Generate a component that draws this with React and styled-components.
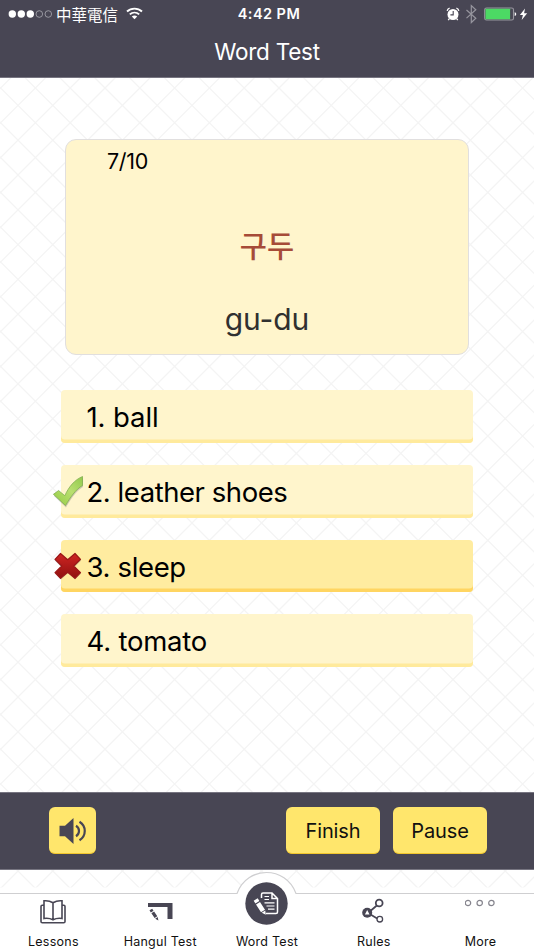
import React from 'react';
import styled, { createGlobalStyle } from 'styled-components';

const dark = '#484654';
const yellow = '#ffe66c';

// 5 x 5 cells of 34.8px, so that the tile has a whole pixel size
const latticeLines = Array.from({ length: 12 }, (_, i) => {
  const x = (i - 6) * 34.8;
  return `M${x} 0l174 174M${174 - x} 0l-174 174`;
}).join('');

const lattice = encodeURIComponent(
  `<svg xmlns="http://www.w3.org/2000/svg" width="174" height="174" viewBox="0 0 174 174"><path d="${latticeLines}" stroke="#f4f4f4" stroke-width="1.3" stroke-linecap="square" fill="none"/></svg>`
);

const GlobalStyle = createGlobalStyle`
  * {
    box-sizing: border-box;
  }
  body {
    margin: 0;
    background: #fff;
    font-family: Inter, 'Noto Sans CJK TC', 'Noto Sans CJK KR', sans-serif;
  }
`;

const Screen = styled.div`
  width: 534px;
  height: 950px;
  overflow: hidden;
  display: flex;
  flex-direction: column;
  background: #fff url("data:image/svg+xml,${lattice}") 18px 1px / 174px 174px;
`;

const Header = styled.header`
  height: 78px;
  background: ${dark};
  border-bottom: 1px solid #777581;
  color: #fff;
`;

const StatusBar = styled.div`
  height: 27px;
  padding: 0 5px 0 8px;
  display: grid;
  grid-template-columns: 1fr auto 1fr;
  align-items: center;
`;

const StatusGroup = styled.div`
  display: flex;
  align-items: center;
  justify-content: ${(p) => (p.$end ? 'flex-end' : 'flex-start')};
`;

const Carrier = styled.span`
  margin: 0 8px 0 4px;
  font: 400 15.5px/26px 'Noto Sans CJK TC', sans-serif;
`;

const Time = styled.span`
  padding-left: 1px;
  font-size: 14.5px;
  font-weight: 600;
  letter-spacing: 0.45px;
`;

const Title = styled.h1`
  margin: 0;
  font-size: 22.5px;
  line-height: 50px;
  font-weight: 400;
  letter-spacing: -0.25px;
  text-align: center;
`;

const Main = styled.main`
  height: 714px;
  padding: 61px 61px 0;
`;

const Card = styled.section`
  height: 215.5px;
  margin: 0 4px 35.5px;
  padding-top: 9px;
  border: 1.5px solid #e1dfdf;
  border-radius: 11px;
  background: #fff5cc;
  text-align: center;
`;

const Counter = styled.div`
  padding-left: 41px;
  font-size: 21.5px;
  line-height: 24px;
  letter-spacing: -0.3px;
  text-align: left;
`;

const Korean = styled.div`
  margin-top: 49px;
  color: #a64b38;
  font: 500 29.5px/44px 'Noto Sans CJK KR', sans-serif;
`;

const Romanized = styled.div`
  margin-top: 35px;
  color: #303030;
  font-size: 30px;
  line-height: 36px;
  letter-spacing: -0.1px;
`;

const Options = styled.div`
  display: flex;
  flex-direction: column;
  gap: 22px;
`;

const Option = styled.div`
  position: relative;
  height: 52.8px;
  padding-left: 25.5px;
  border-radius: 4px;
  background: ${(p) => (p.$picked ? '#ffeca0' : '#fff5cc')};
  box-shadow: inset 0 -3.5px ${(p) => (p.$picked ? '#ffd561' : '#ffea9c')};
  font-size: 27.5px;
  line-height: 55.4px;
  letter-spacing: ${(p) => p.$tracking}px;
`;

const Mark = styled.svg`
  position: absolute;
  left: -9px;
  top: 9px;
`;

const Toolbar = styled.div`
  height: 78px;
  padding: 0 47px 1px 49px;
  border-top: 1px solid #777581;
  border-bottom: 1px solid #777581;
  background: ${dark};
  display: flex;
  align-items: center;
  gap: 13px;
`;

const Button = styled.button`
  width: ${(p) => p.$width || 94}px;
  height: 47px;
  margin: 0 ${(p) => (p.$push ? 'auto' : 0)} 0 0;
  padding: 2px 0 0;
  border: 0;
  border-bottom: 1.5px solid #f1c62e;
  border-radius: 6px;
  background: ${yellow};
  color: #111;
  font: 400 20px/44px Inter, sans-serif;
  letter-spacing: -0.15px;
  display: flex;
  align-items: center;
  justify-content: center;
`;

const TabBar = styled.nav`
  position: relative;
  height: 80px;
  padding-top: 23px;
  display: grid;
  grid-template-columns: repeat(5, 1fr);
  grid-template-rows: 57px;
`;

const Outline = styled.svg`
  position: absolute;
  left: 0;
  top: 0;
`;

const Tab = styled.div`
  position: relative;
  height: 57px;
  display: flex;
  flex-direction: column;
  align-items: center;
  justify-content: flex-end;
`;

const TabIcon = styled.svg`
  margin-bottom: ${(p) => p.$gap}px;
  flex: none;
`;

const Label = styled.span`
  height: 18px;
  font-size: 12.5px;
  line-height: 19px;
  letter-spacing: 0.25px;
  white-space: nowrap;
  color: #111;
`;

const Signal = () => (
  <svg width="44" height="12" viewBox="0 0 44 12">
    {[0, 1, 2, 3, 4].map((i) => (
      <circle
        key={i}
        cx={4.3 + i * 9}
        cy="6"
        r={i < 3 ? 3.7 : 3.3}
        fill={i < 3 ? '#fff' : 'none'}
        stroke={i < 3 ? 'none' : '#aaa9b1'}
        strokeWidth="0.8"
      />
    ))}
  </svg>
);

const Wifi = () => (
  <svg width="17" height="13" viewBox="0 0 17 13" fill="none" stroke="#fff" strokeWidth="1.9">
    <path d="M1 4.5C5.2.6 11.8.6 16 4.5M3.8 7.4c2.7-2.4 6.7-2.4 9.4 0" />
    <path d="M5.8 9.5c1.5-1.3 3.9-1.3 5.4 0L8.5 12.2z" fill="#fff" stroke="none" />
  </svg>
);

const StatusIcons = () => (
  <svg width="83" height="20" viewBox="0 0 83 20">
    <circle cx="7" cy="10.5" r="5.5" fill="#fff" />
    <path d="M1.2 6.8Q1.5 4.8 3.6 4.2M12.8 6.8Q12.5 4.8 10.4 4.2M3.3 14.6l-1 1.6M10.7 14.6l1 1.6" stroke="#fff" strokeWidth="1.3" fill="none" />
    <path d="M7.2 7v3.9H4.4" stroke={dark} strokeWidth="1.1" fill="none" />
    <path d="M20.5 6l9.3 8.3-4.5 4.2V1.6l4.5 4.2-9.3 8.3" fill="none" stroke="#96959e" strokeWidth="1.2" />
    <rect x="38.7" y="4" width="28.8" height="12" rx="1.8" fill="none" stroke="#98979f" strokeWidth="1.1" />
    <rect x="39.5" y="4.8" width="24.6" height="10.4" rx="0.5" fill="#4cd964" />
    <path d="M68.7 8.2c2 .6 2 3.3 0 3.9z" fill="#fff" />
    <path d="M79 4.5l-5.1 6.4h3l-1.2 5 5.5-6.7h-3.1z" fill="#fff" />
  </svg>
);

const Check = () => (
  <Mark width="34" height="36" viewBox="0 0 34 36">
    <defs>
      <linearGradient id="leaf" x1="0" y1="1" x2="1" y2="0">
        <stop offset="0" stopColor="#93cc43" />
        <stop offset="0.55" stopColor="#b9df70" />
        <stop offset="1" stopColor="#91c94c" />
      </linearGradient>
    </defs>
    <path d="M2 22L7 18.5l6 5C17 15 23 8 31 4v9C24 17 19 25 14 33.5z" fill="#777" opacity=".35" />
    <path d="M1.4 20.3l5.2-3.8 6.2 5.2C16.8 12.8 22.5 5.8 30.5 2.5v9C23.5 15.5 18.3 23.5 13.5 31.5z" fill="url(#leaf)" stroke="#78a84a" strokeWidth="0.7" />
  </Mark>
);

const Cross = () => (
  <Mark width="34" height="36" viewBox="0 0 34 36">
    <defs>
      <linearGradient id="ruby" x1="0" y1="0" x2="0" y2="1">
        <stop offset="0" stopColor="#cf2522" />
        <stop offset="1" stopColor="#8f1010" />
      </linearGradient>
    </defs>
    <path d="M9 5.5L16 12l7-6.5 6 6L22.5 18l6.5 6.5-6 6L16 24l-7 6.5-6-6L9.5 18 3 11.5z" fill="#555" opacity=".35" />
    <path d="M8.5 4.5L15.7 10.7l7.3-6.2 5.5 5.8L21.7 17l6.8 6.6-5.5 5.8-7.3-6.2-7.2 6.2-5.5-5.8L9.7 17l-6.7-6.7z" fill="url(#ruby)" stroke="#9a1717" strokeWidth="1.2" strokeLinejoin="round" />
  </Mark>
);

const Speaker = () => (
  <svg width="27" height="28" viewBox="0 0 27 28">
    <path d="M0.5 8.7H6L14.5 1v26L6 19.3H0.5z" fill={dark} />
    <path d="M17 8.8c4 2.5 4 7.9 0 10.4M20.5 4.8c7 4.4 7 14 0 18.4" fill="none" stroke={dark} strokeWidth="2.2" />
  </svg>
);

const LessonsIcon = () => (
  <TabIcon $gap={7.5} width="28" height="26" viewBox="0 0 28 26" fill="none" stroke={dark} strokeWidth="1.6">
    <path d="M5 1.8Q10 1.3 14 3.7Q18 1.3 23 1.8V19.5Q18 18.8 14 20.8Q10 18.8 5 19.5zM14 3.7v17" />
    <path d="M5 6.2H3.2Q2 6.2 2 7.5V22.5Q2 23.8 3.3 23.8H24.7Q26 23.8 26 22.5V7.5Q26 6.2 24.8 6.2H23" />
  </TabIcon>
);

const HangulIcon = () => (
  <TabIcon $gap={10} width="26" height="20" viewBox="0 0 26 20">
    <path d="M1 1h24.5v16h-5V5H1z" fill={dark} />
    <path d="M2.5 8.2l2.7-1.5 1.3 2-2.7 1.7zM4.4 11.2l2.7-1.7 3.2 4.8-2.7 1.8zM8.2 16.8l2.5-1.7.7 3.5z" fill={dark} />
  </TabIcon>
);

const WordIcon = () => (
  <TabIcon $gap={7.5} width="43" height="43" viewBox="0 0 43 43">
    <circle cx="21.5" cy="21.5" r="21.2" fill={dark} />
    <g fill="none" stroke="#fff" strokeWidth="1.5">
      <path d="M16.5 16v-3.5Q16.5 11 18 11h9l5.5 5.5V30q0 1.5-1.5 1.5H21M27 11v5.5h5.5" />
      <path d="M19.5 14.5h4.5M19.5 17.5h4.5M19.5 20.8h10M21.5 24h8M23 27.2h6.5" strokeWidth="1.2" />
    </g>
    <path d="M8.7 18.8l4-2.5 1.7 2.7-4 2.6zM11 22.5l4-2.5 5 7.8-4 2.5zM16.8 30.8l3.5-2.3.5 4.3z" fill="#fff" />
  </TabIcon>
);

const RulesIcon = () => (
  <TabIcon $gap={8} width="24" height="26" viewBox="0 0 24 26" fill="none" stroke={dark}>
    <path d="M6 15l10-8.5M6 15l10 6" strokeWidth="1.7" />
    <circle cx="17.2" cy="5" r="3.4" strokeWidth="1.8" fill="#fff" />
    <circle cx="17.8" cy="21.2" r="2.8" strokeWidth="1.3" fill="#fff" />
    <circle cx="5.2" cy="14.8" r="5" fill={dark} stroke="none" />
    <path d="M5.2 12l2.3 4.5H2.9z" fill="#fff" stroke="none" />
  </TabIcon>
);

const MoreIcon = () => (
  <TabIcon $gap={25.5} width="32" height="8" viewBox="0 0 32 8" fill="none" stroke="#85848d" strokeWidth="1.2">
    <circle cx="3" cy="4" r="2.7" />
    <circle cx="14.7" cy="4" r="2.7" />
    <circle cx="26.4" cy="4" r="2.7" />
  </TabIcon>
);

const options = [
  { text: '1. ball', tracking: -0.1 },
  { text: '2. leather shoes', tracking: -0.45, mark: <Check /> },
  { text: '3. sleep', tracking: -0.35, mark: <Cross />, picked: true },
  { text: '4. tomato', tracking: -0.2 },
];

const tabs = [
  { label: 'Lessons', icon: <LessonsIcon /> },
  { label: 'Hangul Test', icon: <HangulIcon /> },
  { label: 'Word Test', icon: <WordIcon /> },
  { label: 'Rules', icon: <RulesIcon /> },
  { label: 'More', icon: <MoreIcon /> },
];

const App = () => {
  return (
    <>
      <GlobalStyle />
      <Screen>
        <Header>
          <StatusBar>
            <StatusGroup>
              <Signal />
              <Carrier>中華電信</Carrier>
              <Wifi />
            </StatusGroup>
            <Time>4:42 PM</Time>
            <StatusGroup $end>
              <StatusIcons />
            </StatusGroup>
          </StatusBar>
          <Title>Word Test</Title>
        </Header>
        <Main>
          <Card>
            <Counter>7/10</Counter>
            <Korean>구두</Korean>
            <Romanized>gu-du</Romanized>
          </Card>
          <Options>
            {options.map((o) => (
              <Option key={o.text} $picked={o.picked} $tracking={o.tracking}>
                {o.mark}
                {o.text}
              </Option>
            ))}
          </Options>
        </Main>
        <Toolbar>
          <Button $width={47} $push aria-label="Play">
            <Speaker />
          </Button>
          <Button>Finish</Button>
          <Button>Pause</Button>
        </Toolbar>
        <TabBar>
          <Outline width="534" height="80" viewBox="0 0 534 80">
            <path d="M0 17.5H534V80H0z" fill="#fff" />
            <path d="M-1 23.5H237C247-4.5 286-4.5 296 23.5H535V81H-1z" fill="#fff" stroke="#cfcfd1" strokeWidth="1.2" />
          </Outline>
          {tabs.map((t) => (
            <Tab key={t.label}>
              {t.icon}
              <Label>{t.label}</Label>
            </Tab>
          ))}
        </TabBar>
      </Screen>
    </>
  );
};

export default App;
